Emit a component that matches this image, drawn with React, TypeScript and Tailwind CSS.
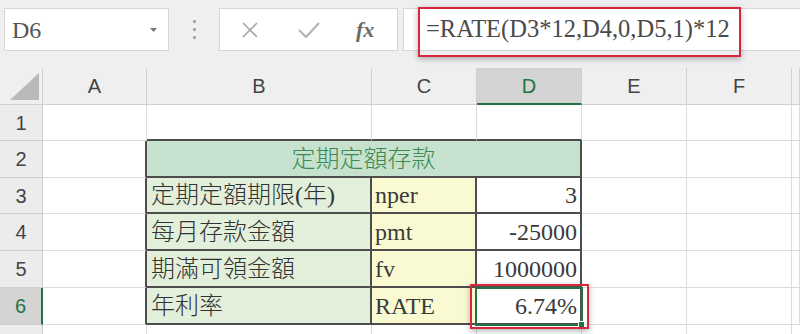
import React from "react";

const gridCols = "grid grid-cols-[43px_104px_225px_105px_105px_105px_105px_1fr]";
const cellFont = "font-['Liberation_Serif','Noto_Sans_CJK_TC',serif] text-[24px] text-[#3a3a3a] leading-none";
const cjkFont = "font-['Liberation_Serif','Noto_Sans_CJK_TC',serif] font-light text-[24px] text-[#333] leading-none";
const hdrFont = "font-['Liberation_Sans',sans-serif] text-[20px] text-[#444] leading-none";

const plain = "border-r border-b border-[#dcdcdc] bg-white";
const darkRight = "border-r-2 border-r-[#4d4d4d] border-b border-b-[#dcdcdc] bg-white";
const darkBottom = "border-r border-r-[#dcdcdc] border-b-2 border-b-[#4d4d4d] bg-white";
const tbl = "border-r-2 border-b-2 border-[#4d4d4d]";

const rowHdr = `flex items-center justify-center border-r border-b border-[#cfcfcf] bg-[#ececec] ${hdrFont}`;

const data = [
  { n: "3", label: "定期定額期限(年)", key: "nper", val: "3" },
  { n: "4", label: "每月存款金額", key: "pmt", val: "-25000" },
  { n: "5", label: "期滿可領金額", key: "fv", val: "1000000" },
];

function TopBar() {
  return (
    <div className="h-[68px] bg-[#efefef] flex items-start pt-[8px]">
      <div className="ml-[4px] w-[165px] h-[43px] bg-white border border-[#d6d6d6] flex items-center justify-between pl-[7px] pr-[11px]">
        <span className="font-['Liberation_Serif',serif] text-[24px] text-[#555] leading-none">D6</span>
        <svg width="7" height="4" viewBox="0 0 7 4">
          <path d="M0 0 L7 0 L3.5 4 Z" fill="#777" />
        </svg>
      </div>
      <div className="w-[50px] h-[43px] flex flex-col items-center justify-center gap-[5px]">
        <div className="w-[3px] h-[3px] bg-[#a8a8a8]" />
        <div className="w-[3px] h-[3px] bg-[#a8a8a8]" />
        <div className="w-[3px] h-[3px] bg-[#a8a8a8]" />
      </div>
      <div className="w-[179px] h-[43px] bg-white border border-[#d6d6d6] flex items-center pl-[21px]">
        <svg width="18" height="16" viewBox="0 0 18 16">
          <path d="M2 1 L16 15 M16 1 L2 15" stroke="#a8a8a8" strokeWidth="1.6" fill="none" />
        </svg>
        <svg className="ml-[39px]" width="22" height="16" viewBox="0 0 22 16">
          <path d="M1 8 L8 15 L21 1" stroke="#b4b4b4" strokeWidth="2.2" fill="none" />
        </svg>
        <span className="ml-[36px] font-['Liberation_Serif',serif] italic font-bold text-[22px] text-[#6a6a6a] leading-none">
          fx
        </span>
      </div>
      <div className="relative ml-[5px] flex-1 h-[43px] bg-white border border-r-0 border-[#d6d6d6] flex items-center pl-[22px]">
        <span className="font-['Liberation_Serif',serif] text-[24.5px] text-[#4a4a4a] leading-none whitespace-nowrap">
          =RATE(D3*12,D4,0,D5,1)*12
        </span>
        <div className="absolute left-[14px] top-[-2px] w-[323px] h-[50px] border-2 border-[#d8273a] shadow-[0_2px_6px_rgba(0,0,0,0.3)]" />
      </div>
    </div>
  );
}

function HeaderRow() {
  const cols = ["A", "B", "C", "D", "E", "F", ""];
  return (
    <div className={`${gridCols} h-[37px] bg-[#efefef]`}>
      <div className="border-r border-b border-[#cfcfcf] flex items-end justify-end pr-[3px] pb-[4px]">
        <svg width="29" height="27" viewBox="0 0 29 27">
          <path d="M29 0 L29 27 L0 27 Z" fill="#b9b9b9" />
        </svg>
      </div>
      {cols.map((c, i) =>
        c === "D" ? (
          <div
            key={i}
            className={`flex items-center justify-center bg-[#d3d3d3] border-r border-r-[#cfcfcf] border-b-2 border-b-[#217346] ${hdrFont} !text-[#217346]`}
          >
            {c}
          </div>
        ) : (
          <div key={i} className={`flex items-center justify-center border-r border-b border-[#cfcfcf] ${hdrFont}`}>
            {c}
          </div>
        )
      )}
    </div>
  );
}

export default function App() {
  return (
    <div className="w-[800px] h-[334px] overflow-hidden bg-white">
      <TopBar />
      <HeaderRow />

      {/* row 1 */}
      <div className={`${gridCols} h-[36px]`}>
        <div className={rowHdr}>1</div>
        <div className={plain} />
        <div className={darkBottom} />
        <div className={darkBottom} />
        <div className={darkBottom} />
        <div className={plain} />
        <div className={plain} />
        <div className={plain} />
      </div>

      {/* row 2 */}
      <div className={`${gridCols} h-[37px]`}>
        <div className={rowHdr}>2</div>
        <div className={darkRight} />
        <div className={`col-span-3 ${tbl} bg-[#c6e1cd] flex items-center justify-center ${cjkFont} !text-[#3d8b52]`}>
          定期定額存款
        </div>
        <div className={plain} />
        <div className={plain} />
        <div className={plain} />
      </div>

      {data.map((r, i) => (
        <div key={r.n} className={`${gridCols} ${i === 0 ? "h-[36px]" : "h-[37px]"}`}>
          <div className={rowHdr}>{r.n}</div>
          <div className={darkRight} />
          <div className={`${tbl} bg-[#e2efda] flex items-center pl-[4px] ${cjkFont}`}>{r.label}</div>
          <div className={`${tbl} bg-[#fafad2] flex items-center pl-[3px] ${cellFont}`}>{r.key}</div>
          <div className={`${tbl} bg-white flex items-center justify-end pr-[3px] ${cellFont}`}>{r.val}</div>
          <div className={plain} />
          <div className={plain} />
          <div className={plain} />
        </div>
      ))}

      {/* row 6 */}
      <div className={`${gridCols} h-[37px]`}>
        <div
          className={`flex items-center justify-center border-b border-b-[#cfcfcf] border-r-2 border-r-[#217346] bg-[#d4d4d4] ${hdrFont} !text-[#217346]`}
        >
          6
        </div>
        <div className={darkRight} />
        <div className={`${tbl} bg-[#e2efda] flex items-center pl-[4px] ${cjkFont}`}>年利率</div>
        <div className={`${tbl} bg-[#fafad2] flex items-center pl-[3px] ${cellFont}`}>RATE</div>
        <div className={`relative ${tbl} bg-white flex items-center justify-end pr-[3px] ${cellFont}`}>
          6.74%
          <div className="absolute left-[-2px] top-[-1px] right-[-3px] bottom-[-3px] border-2 border-[#217346]" />
          <div className="absolute right-[-5px] bottom-[-5px] w-[7px] h-[7px] bg-[#217346] border border-white" />
          <div className="absolute left-[-7px] top-[-4px] right-[-9px] bottom-[-6px] border-2 border-[#d8273a] shadow-[0_2px_6px_rgba(0,0,0,0.3)]" />
        </div>
        <div className={plain} />
        <div className={plain} />
        <div className={plain} />
      </div>

      {/* row 7 */}
      <div className={`${gridCols} h-[20px]`}>
        <div className="border-r border-[#cfcfcf] bg-[#ececec]" />
        <div className="border-r border-[#dcdcdc]" />
        <div className="border-r border-[#dcdcdc]" />
        <div className="border-r border-[#dcdcdc]" />
        <div className="border-r border-[#dcdcdc]" />
        <div className="border-r border-[#dcdcdc]" />
        <div className="border-r border-[#dcdcdc]" />
        <div />
      </div>
    </div>
  );
}
